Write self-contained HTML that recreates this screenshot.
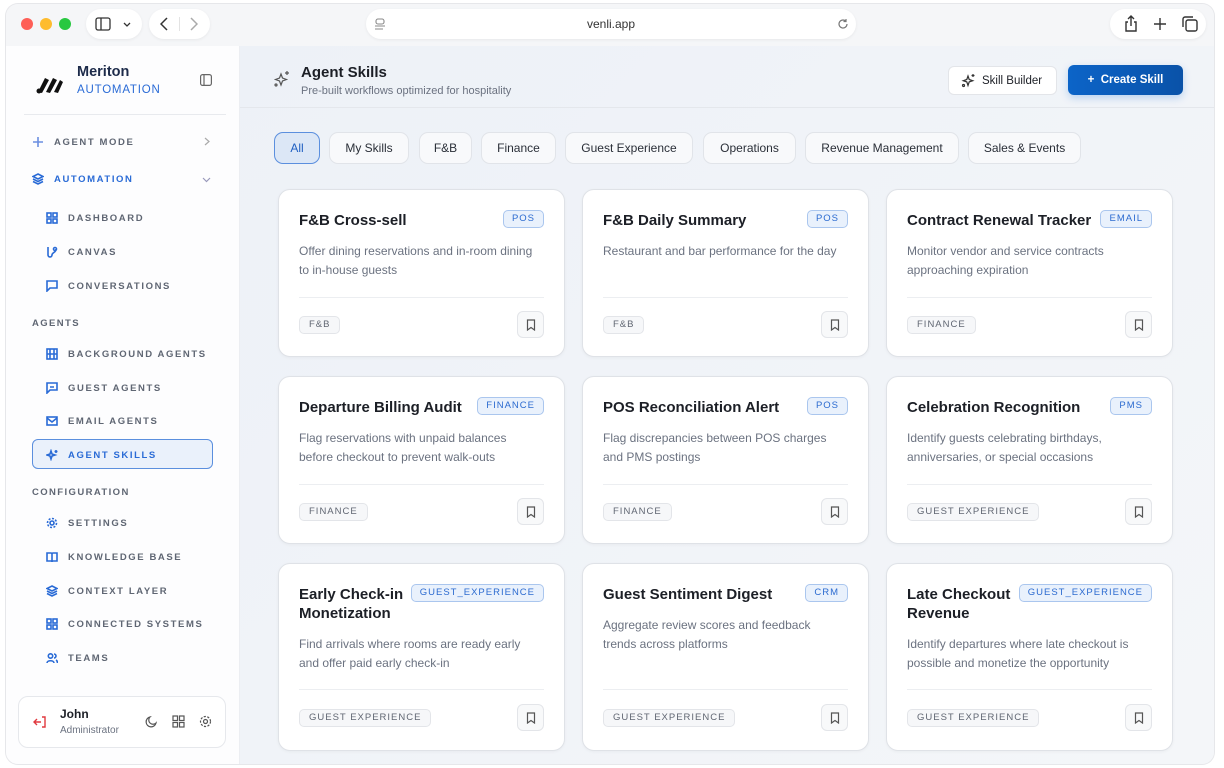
<!DOCTYPE html>
<html><head><meta charset="utf-8">
<style>
*{box-sizing:border-box;margin:0;padding:0}
body{width:1224px;height:768px;background:#fff;font-family:"Liberation Sans",sans-serif;position:relative;overflow:hidden;color:#1f2430}
.win{position:absolute;left:6px;top:4px;width:1208px;height:760px;border-radius:12px;background:#f5f6f8;overflow:hidden;box-shadow:0 0 0 1px #e6e7ea}
.ab{position:absolute}
.pill{position:absolute;background:#fff;border-radius:16px;box-shadow:0 1px 3px rgba(0,0,0,.06)}
.side{position:absolute;left:0;top:42px;width:234px;height:718px;background:#fdfdfe;border-right:1px solid #eceef2}
.main{position:absolute;left:234px;top:42px;width:974px;height:718px;background:linear-gradient(135deg,#edf1f7,#f4f6f9)}
.nav{position:absolute;left:26px;font-size:9.5px;letter-spacing:1.6px;color:#5f6673;font-weight:bold;display:flex;align-items:center;gap:10px}
.nav svg{width:12px;height:12px;stroke:#2a6bd6;fill:none;stroke-width:1.6}
.sec{position:absolute;left:26px;font-size:9.5px;letter-spacing:1.4px;color:#5f6673;font-weight:bold}
.chip{position:absolute;top:86px;height:32px;border:1px solid #e1e4e9;border-radius:9px;background:#f8f9fb;font-size:12px;color:#2a2f38;display:flex;align-items:center;justify-content:center}
.card{position:absolute;width:287px;background:#fff;border:1px solid #dfe2e7;border-radius:12px;box-shadow:0 1px 3px rgba(0,0,0,.04)}
.card h3{position:absolute;left:20px;top:21px;font-size:15px;font-weight:bold;color:#1c1f26;line-height:19px}
.card .tag{position:absolute;right:20px;top:20px;height:18px;padding:0 8px;border:1px solid #aac6ee;background:#e9f1fc;border-radius:5px;font-size:9.5px;letter-spacing:1px;color:#2c6bd0;line-height:16px}
.card p{position:absolute;left:20px;font-size:12px;color:#6b7280;line-height:19px;width:242px}
.card .hr{position:absolute;left:20px;right:20px;height:1px;background:#eceef1}
.card .cat{position:absolute;left:20px;height:18px;padding:0 9px;border:1px solid #e3e5e9;background:#f6f7f9;border-radius:5px;font-size:9.5px;letter-spacing:1px;color:#606672;line-height:16px}
.card .bm{position:absolute;right:20px;width:27px;height:27px;border:1px solid #e3e5e9;background:#f8f9fa;border-radius:6px;display:flex;align-items:center;justify-content:center}
</style></head><body>
<div class="win">
<div class="ab" style="left:0;top:0;width:1208px;height:42px;background:#f5f6f8"></div>
<div class="ab" style="left:15px;top:14px;width:12px;height:12px;border-radius:50%;background:#fe5f57"></div>
<div class="ab" style="left:34px;top:14px;width:12px;height:12px;border-radius:50%;background:#febc2e"></div>
<div class="ab" style="left:53px;top:14px;width:12px;height:12px;border-radius:50%;background:#28c840"></div>
<div class="pill" style="left:80px;top:5px;width:56px;height:30px"><svg class="ab" style="left:9px;top:8px" width="16" height="14" viewBox="0 0 16 14" fill="none" stroke="#333" stroke-width="1.3"><rect x="1" y="1" width="14" height="12" rx="2"/><line x1="6" y1="1" x2="6" y2="13"/></svg><svg class="ab" style="left:37px;top:13px" width="8" height="5" viewBox="0 0 8 5" fill="none" stroke="#333" stroke-width="1.3"><path d="M1 1l3 3 3-3"/></svg></div>
<div class="pill" style="left:143px;top:5px;width:61px;height:30px"><svg class="ab" style="left:11px;top:8px" width="8" height="14" viewBox="0 0 8 14" fill="none" stroke="#333" stroke-width="1.5"><path d="M7 1L1 7l6 6"/></svg><div class="ab" style="left:30px;top:8px;width:1px;height:14px;background:#e3e3e3"></div><svg class="ab" style="left:41px;top:8px" width="8" height="14" viewBox="0 0 8 14" fill="none" stroke="#aaa" stroke-width="1.5"><path d="M1 1l6 6-6 6"/></svg></div>
<div class="pill" style="left:360px;top:5px;width:490px;height:30px"><svg class="ab" style="left:8px;top:9px" width="12" height="12" viewBox="0 0 12 12" fill="none" stroke="#888" stroke-width="1.1"><rect x="2" y="1" width="8" height="5" rx="2"/><line x1="1" y1="8" x2="11" y2="8"/><line x1="1" y1="11" x2="9" y2="11"/></svg><div class="ab" style="left:0;width:490px;top:8px;text-align:center;font-size:12px;color:#333">venli.app</div><svg class="ab" style="left:471px;top:9px" width="12" height="12" viewBox="0 0 12 12" fill="none" stroke="#777" stroke-width="1.2"><path d="M10 6a4 4 0 1 1-1.5-3.1M9 1v2.5H6.5"/></svg></div>
<div class="pill" style="left:1104px;top:5px;width:96px;height:30px">
<svg class="ab" style="left:14px;top:6px" width="14" height="17" viewBox="0 0 14 17" fill="none" stroke="#333" stroke-width="1.4"><path d="M4 7H2v9h10V7h-2M7 11V1M4 4l3-3 3 3"/></svg>
<svg class="ab" style="left:43px;top:8px" width="14" height="14" viewBox="0 0 14 14" stroke="#333" stroke-width="1.4"><path d="M7 1v12M1 7h12"/></svg>
<svg class="ab" style="left:72px;top:7px" width="16" height="16" viewBox="0 0 16 16" fill="none" stroke="#333" stroke-width="1.4"><rect x="4" y="4" width="11" height="11" rx="2"/><path d="M1 11V3a2 2 0 0 1 2-2h8"/></svg></div>

<div class="side">
<svg class="ab" style="left:30px;top:28px" width="28" height="20" viewBox="0 0 28 20"><path d="M2 18L9 4l4 2-7 13zM10 18l7-14 4 2-7 13zM18 18l6-12 3 2-5 11z" fill="#111"/><circle cx="3" cy="17" r="2.5" fill="#111"/></svg>
<div class="ab" style="left:71px;top:18px;font-size:14.5px;font-weight:bold;color:#1d2b4a">Meriton</div>
<div class="ab" style="left:71px;top:38px;font-size:11.5px;letter-spacing:.8px;color:#2a6bd6">AUTOMATION</div>
<svg class="ab" style="left:194px;top:28px" width="12" height="12" viewBox="0 0 12 12" fill="none" stroke="#666" stroke-width="1.2"><rect x=".6" y=".6" width="10.8" height="10.8" rx="2"/><line x1="4" y1="1" x2="4" y2="11"/></svg>
<div class="ab" style="left:18px;top:68px;width:202px;height:1px;background:#e8eaee"></div>
<div class="nav" style="top:90px;left:26px"><svg viewBox="0 0 12 12" style="stroke:#6b8fe0"><path d="M6 1v10M1 6h10"/></svg>AGENT MODE</div>
<svg class="ab" style="left:198px;top:91px" width="6" height="9" viewBox="0 0 6 9" fill="none" stroke="#aaa" stroke-width="1.2"><path d="M1 1l4 3.5L1 8"/></svg>
<div class="nav" style="top:127px;color:#2a6bd6"><svg viewBox="0 0 12 12"><path d="M6 1l5 2.5-5 2.5-5-2.5zM1 6l5 2.5L11 6M1 8.5l5 2.5 5-2.5"/></svg>AUTOMATION</div>
<svg class="ab" style="left:196px;top:131px" width="9" height="6" viewBox="0 0 9 6" fill="none" stroke="#99b" stroke-width="1.2"><path d="M1 1l3.5 3.5L8 1"/></svg>
<div class="nav" style="top:166px;left:40px"><svg viewBox="0 0 12 12"><rect x="1" y="1" width="4" height="4"/><rect x="7" y="1" width="4" height="4"/><rect x="1" y="7" width="4" height="4"/><rect x="7" y="7" width="4" height="4"/></svg>DASHBOARD</div>
<div class="nav" style="top:200px;left:40px"><svg viewBox="0 0 12 12"><path d="M2 1v8a2 2 0 0 0 4 0c0-3 4-2 4-6"/><circle cx="9" cy="3" r="1.5"/></svg>CANVAS</div>
<div class="nav" style="top:234px;left:40px"><svg viewBox="0 0 12 12"><path d="M1 1h10v7H4l-3 3z"/></svg>CONVERSATIONS</div>
<div class="sec" style="top:272px">AGENTS</div>
<div class="nav" style="top:302px;left:40px"><svg viewBox="0 0 12 12"><rect x="1" y="1" width="10" height="10"/><path d="M4 1v10M8 1v10M1 6h10"/></svg>BACKGROUND AGENTS</div>
<div class="nav" style="top:336px;left:40px"><svg viewBox="0 0 12 12"><path d="M1 1h10v7H4l-3 3zM4 5h4"/></svg>GUEST AGENTS</div>
<div class="nav" style="top:369px;left:40px"><svg viewBox="0 0 12 12"><rect x="1" y="2" width="10" height="8"/><path d="M1 3l5 4 5-4"/></svg>EMAIL AGENTS</div>
<div class="ab" style="left:26px;top:393px;width:181px;height:30px;border:1px solid #5b8fde;background:#eaf1fb;border-radius:6px"></div>
<div class="nav" style="top:403px;left:40px;color:#2a6bd6"><svg viewBox="0 0 12 12"><path d="M5 2l1 3 3 1-3 1-1 3-1-3-3-1 3-1zM10 1v3M8.5 2.5h3"/></svg>AGENT SKILLS</div>
<div class="sec" style="top:441px">CONFIGURATION</div>
<div class="nav" style="top:471px;left:40px"><svg viewBox="0 0 12 12"><circle cx="6" cy="6" r="2"/><circle cx="6" cy="6" r="4.5" stroke-dasharray="2 1.5"/></svg>SETTINGS</div>
<div class="nav" style="top:505px;left:40px"><svg viewBox="0 0 12 12"><path d="M1 2h4a1 1 0 0 1 1 1v8a1 1 0 0 0-1-1H1zM11 2H7a1 1 0 0 0-1 1v8a1 1 0 0 1 1-1h4z"/></svg>KNOWLEDGE BASE</div>
<div class="nav" style="top:539px;left:40px"><svg viewBox="0 0 12 12"><path d="M6 1l5 2.5-5 2.5-5-2.5zM1 6l5 2.5L11 6M1 8.5l5 2.5 5-2.5"/></svg>CONTEXT LAYER</div>
<div class="nav" style="top:572px;left:40px"><svg viewBox="0 0 12 12"><rect x="1" y="1" width="4" height="4"/><rect x="7" y="1" width="4" height="4"/><rect x="1" y="7" width="4" height="4"/><rect x="7" y="7" width="4" height="4"/></svg>CONNECTED SYSTEMS</div>
<div class="nav" style="top:606px;left:40px"><svg viewBox="0 0 12 12"><circle cx="4.5" cy="4" r="2.2"/><path d="M1 11c0-3 7-3 7 0M8 2a2 2 0 0 1 0 4M10 8c1 .5 1.5 1.5 1.5 3"/></svg>TEAMS</div>
<div class="ab" style="left:12px;top:650px;width:208px;height:52px;border:1px solid #e6e8ec;border-radius:10px;background:#fff"></div>
<svg class="ab" style="left:27px;top:670px" width="14" height="12" viewBox="0 0 14 12" fill="none" stroke="#e0393e" stroke-width="1.4"><path d="M9 1h3v10H9M8 6H1M4 3L1 6l3 3"/></svg>
<div class="ab" style="left:54px;top:661px;font-size:12px;font-weight:bold;color:#1c1f26">John</div>
<div class="ab" style="left:54px;top:679px;font-size:10px;color:#6b7280">Administrator</div>
<svg class="ab" style="left:139px;top:669px" width="13" height="13" viewBox="0 0 13 13" fill="none" stroke="#555" stroke-width="1.2"><path d="M11 8A5 5 0 1 1 5 2a4 4 0 0 0 6 6z"/></svg>
<svg class="ab" style="left:166px;top:669px" width="13" height="13" viewBox="0 0 13 13" fill="none" stroke="#555" stroke-width="1.2"><rect x="1" y="1" width="4.5" height="4.5"/><rect x="7.5" y="1" width="4.5" height="4.5"/><rect x="1" y="7.5" width="4.5" height="4.5"/><rect x="7.5" y="7.5" width="4.5" height="4.5"/></svg>
<svg class="ab" style="left:193px;top:669px" width="13" height="13" viewBox="0 0 13 13" fill="none" stroke="#555" stroke-width="1.2"><circle cx="6.5" cy="6.5" r="2"/><circle cx="6.5" cy="6.5" r="5" stroke-dasharray="2.2 1.4"/></svg>
</div>

<div class="main">
<svg class="ab" style="left:33px;top:24px" width="18" height="18" viewBox="0 0 18 18" fill="none" stroke="#555" stroke-width="1.2"><path d="M8 4l1.5 4 4 1.5-4 1.5L8 15l-1.5-4-4-1.5 4-1.5zM14 1v4M12 3h4"/><circle cx="3" cy="15" r="1"/></svg>
<div class="ab" style="left:61px;top:18px;font-size:15px;font-weight:bold;color:#1c1f26">Agent Skills</div>
<div class="ab" style="left:61px;top:39px;font-size:11px;color:#6b7280">Pre-built workflows optimized for hospitality</div>
<div class="ab" style="left:708px;top:20px;width:109px;height:29px;background:#fff;border:1px solid #e3e5e9;border-radius:6px;font-size:11.5px;color:#1c1f26;display:flex;align-items:center;padding-left:33px">Skill Builder</div>
<svg class="ab" style="left:721px;top:27px" width="15" height="15" viewBox="0 0 15 15" fill="none" stroke="#333" stroke-width="1.2"><path d="M7 3l1.2 3.5 3.5 1.2-3.5 1.2L7 12.5l-1.2-3.6L2.3 7.7l3.5-1.2zM12 1v3M10.5 2.5h3"/><circle cx="2.5" cy="12.5" r="1"/></svg>
<div class="ab" style="left:828px;top:19px;width:115px;height:30px;background:linear-gradient(90deg,#0c64c8,#0a52a8);border-radius:6px;font-size:11.5px;font-weight:bold;color:#fff;display:flex;align-items:center;justify-content:center;box-shadow:0 3px 8px rgba(20,110,220,.25)">+&nbsp;&nbsp;Create Skill</div>
<div class="ab" style="left:0;top:61px;width:974px;height:1px;background:#e4e7ec"></div>

<div class="chip" style="left:34px;width:46px;background:#dce7f6;border-color:#5b8fde;color:#1f5fc2">All</div>
<div class="chip" style="left:89px;width:80px">My Skills</div>
<div class="chip" style="left:179px;width:53px">F&amp;B</div>
<div class="chip" style="left:241px;width:75px">Finance</div>
<div class="chip" style="left:325px;width:128px">Guest Experience</div>
<div class="chip" style="left:463px;width:93px">Operations</div>
<div class="chip" style="left:565px;width:154px">Revenue Management</div>
<div class="chip" style="left:728px;width:113px">Sales &amp; Events</div>
</div>
</div>

<div id="cards"></div>
<script>
const B='<svg width="10" height="12" viewBox="0 0 10 12" fill="none" stroke="#555" stroke-width="1.2"><path d="M1.5 1h7v10L5 8.5 1.5 11z"/></svg>';
const data=[
["F&B Cross-sell","POS","Offer dining reservations and in-room dining to in-house guests","F&B"],
["F&B Daily Summary","POS","Restaurant and bar performance for the day","F&B"],
["Contract Renewal Tracker","EMAIL","Monitor vendor and service contracts approaching expiration","FINANCE"],
["Departure Billing Audit","FINANCE","Flag reservations with unpaid balances before checkout to prevent walk-outs","FINANCE"],
["POS Reconciliation Alert","POS","Flag discrepancies between POS charges and PMS postings","FINANCE"],
["Celebration Recognition","PMS","Identify guests celebrating birthdays, anniversaries, or special occasions","GUEST EXPERIENCE"],
["Early Check-in<br>Monetization","GUEST_EXPERIENCE","Find arrivals where rooms are ready early and offer paid early check-in","GUEST EXPERIENCE"],
["Guest Sentiment Digest","CRM","Aggregate review scores and feedback trends across platforms","GUEST EXPERIENCE"],
["Late Checkout<br>Revenue","GUEST_EXPERIENCE","Identify departures where late checkout is possible and monetize the opportunity","GUEST EXPERIENCE"]];
const xs=[278,582,886],ys=[189,376,563];let h='';
data.forEach((d,i)=>{const r=Math.floor(i/3),c=i%3;const tall=r==2;const ht=tall?188:168;
const hrT=tall?125:107,ft=tall?145:126;
h+=`<div class="card" style="left:${xs[c]}px;top:${ys[r]}px;height:${ht}px"><h3>${d[0]}</h3><span class="tag">${d[1]}</span><p style="top:${d[0].includes('<br>')?71:52}px">${d[2]}</p><div class="hr" style="top:${hrT}px"></div><span class="cat" style="top:${ft}px">${d[3]}</span><div class="bm" style="top:${ft-5}px">${B}</div></div>`;});
document.getElementById('cards').innerHTML=h;
</script>
</body></html>
